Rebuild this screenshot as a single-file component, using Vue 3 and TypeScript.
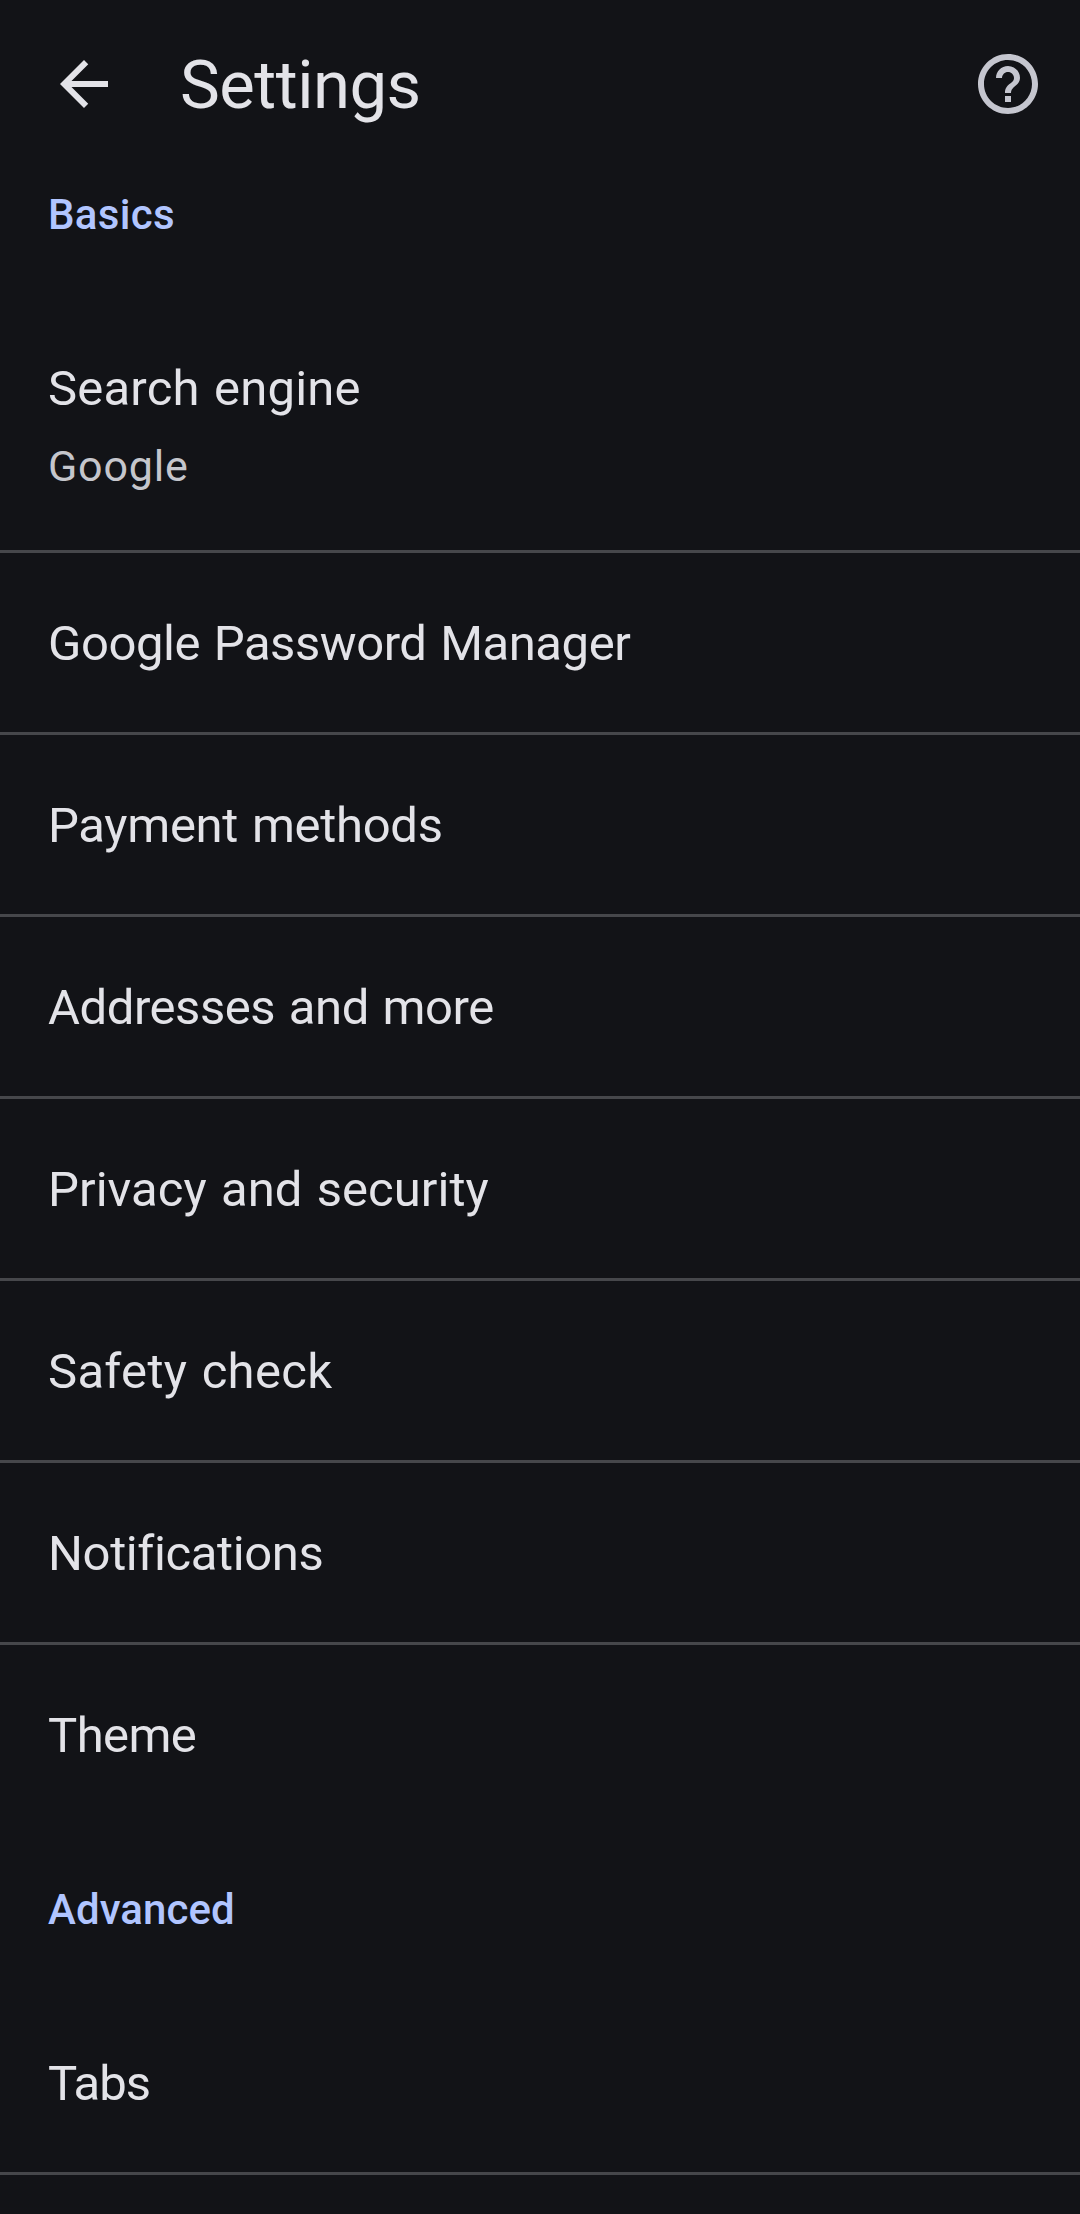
<script setup lang="ts">
interface Item {
  label: string
  tracking: number
  summary?: string
}

interface Section {
  title: string
  tracking: number
  items: Item[]
}

const sections: Section[] = [
  {
    title: 'Basics',
    tracking: 0.3,
    items: [
      { label: 'Search engine', tracking: 0.2, summary: 'Google' },
      { label: 'Google Password Manager', tracking: -0.45 },
      { label: 'Payment methods', tracking: -0.3 },
      { label: 'Addresses and more', tracking: -0.45 },
      { label: 'Privacy and security', tracking: 0.06 },
      { label: 'Safety check', tracking: 0.3 },
      { label: 'Notifications', tracking: -0.38 },
      { label: 'Theme', tracking: -0.6 },
    ],
  },
  {
    title: 'Advanced',
    tracking: 0.07,
    items: [
      { label: 'Tabs', tracking: -0.95 },
      { label: '', tracking: 0 },
    ],
  },
]
</script>

<template>
  <div class="screen">
    <header class="app-bar">
      <svg class="icon back" viewBox="0 0 24 24" aria-hidden="true">
        <path d="M20 11H7.83l5.59-5.59L12 4l-8 8 8 8 1.41-1.41L7.83 13H20v-2z" />
      </svg>
      <h1 class="title">Settings</h1>
      <svg class="icon help" viewBox="0 0 24 24" aria-hidden="true">
        <path
          d="M11 18h2v-2h-2v2zm1-16C6.48 2 2 6.48 2 12s4.48 10 10 10 10-4.48 10-10S17.52 2 12 2zm0 18c-4.41 0-8-3.59-8-8s3.59-8 8-8 8 3.59 8 8-3.59 8-8 8zm0-14c-2.21 0-4 1.79-4 4h2c0-1.1.9-2 2-2s2 .9 2 2c0 2-3 1.75-3 5h2c0-2.25 3-2.5 3-5 0-2.21-1.79-4-4-4z"
        />
      </svg>
    </header>

    <section v-for="section in sections" :key="section.title">
      <h2 class="section-title" :style="{ letterSpacing: section.tracking + 'px' }">{{ section.title }}</h2>
      <ul class="list">
        <li v-for="item in section.items" :key="item.label" class="row" :class="{ tall: item.summary }">
          <span class="label" :style="{ letterSpacing: item.tracking + 'px' }">{{ item.label }}</span>
          <span v-if="item.summary" class="summary">{{ item.summary }}</span>
        </li>
      </ul>
    </section>
  </div>
</template>

<style>
body {
  background: #121317;
}
</style>

<style scoped>
.screen {
  height: 2214px;
  overflow: hidden;
  background: #121317;
  color: #e3e3e8;
  font-family: Roboto, 'Noto Sans', sans-serif;
}

.app-bar {
  box-sizing: border-box;
  display: flex;
  align-items: flex-start;
  height: 129px;
  padding: 46px 36px 0 48px;
}

.icon {
  flex: none;
  width: 72px;
  height: 72px;
  margin-top: 2px;
}

.back {
  fill: #e3e3e8;
}

.help {
  fill: #c5c6cf;
}

.title {
  flex: 1;
  margin: 0 0 0 60px;
  font-size: 67px;
  font-weight: 400;
  line-height: 78px;
  letter-spacing: -0.5px;
}

.section-title {
  box-sizing: border-box;
  height: 166px;
  margin: 0;
  padding: 61px 48px 0;
  color: #b1c5ff;
  font-size: 42px;
  font-weight: 500;
  line-height: 49px;
}

.list {
  margin: 0;
  padding: 0;
  list-style: none;
}

.row {
  box-sizing: border-box;
  display: flex;
  flex-direction: column;
  height: 182px;
  padding: 60px 48px 0;
  border-top: 3px solid #46474b;
}

.row:first-child {
  border-top-color: transparent;
}

.row.tall {
  height: 255px;
}

.label {
  font-size: 49px;
  line-height: 61px;
  word-spacing: 2px;
}

.summary {
  margin-top: 23px;
  color: #c5c6cc;
  font-size: 43px;
  line-height: 49px;
  letter-spacing: 0.8px;
}
</style>
